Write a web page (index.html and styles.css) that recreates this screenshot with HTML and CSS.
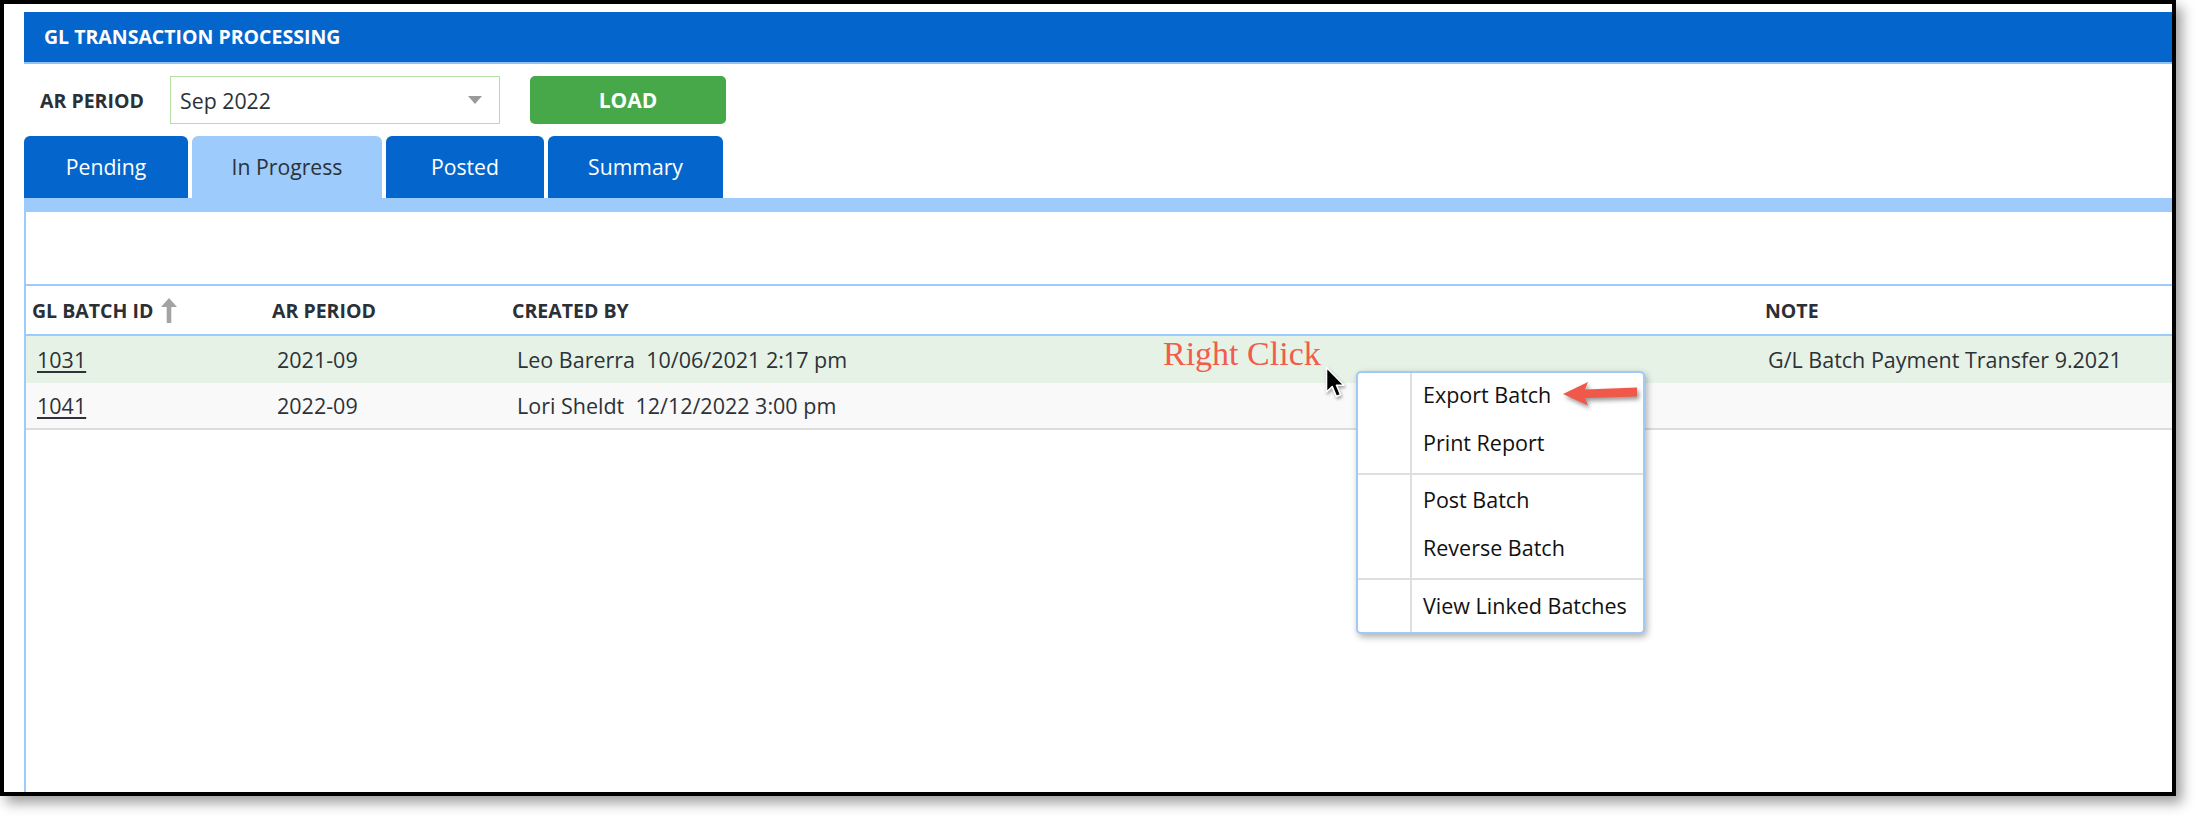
FILE: index.html
```html
<!DOCTYPE html>
<html lang="en">
<head>
<meta charset="utf-8">
<title>GL Transaction Processing</title>
<link rel="stylesheet" href="styles.css">
</head>
<body>
<div class="frame">
  <div class="titlebar">GL TRANSACTION PROCESSING</div>
  <div class="toolbar">
    <span class="field-label">AR PERIOD</span>
    <div class="select"><span class="select-value">Sep 2022</span><span class="caret"></span></div>
    <button class="btn-load">LOAD</button>
  </div>
  <div class="tabs">
    <div class="tab tab-pending">Pending</div>
    <div class="tab tab-progress active">In Progress</div>
    <div class="tab tab-posted">Posted</div>
    <div class="tab tab-summary">Summary</div>
  </div>
  <div class="tabbar"></div>
  <div class="panel">
    <div class="grid">
      <div class="row head">
        <div class="cell">GL BATCH ID
          <svg class="sort-icon" viewBox="0 0 16 25" width="16" height="25" aria-hidden="true">
            <polygon points="8,0 16,9 10.3,9 10.3,25 5.7,25 5.7,9 0,9" fill="#a3a3a3"/>
          </svg>
        </div>
        <div class="cell">AR PERIOD</div>
        <div class="cell">CREATED BY</div>
        <div class="cell">NOTE</div>
      </div>
      <div class="row r1">
        <div class="cell"><a class="id-link">1031</a></div>
        <div class="cell">2021-09</div>
        <div class="cell">Leo Barerra&nbsp; 10/06/2021 2:17 pm</div>
        <div class="cell note">G/L Batch Payment Transfer 9.2021</div>
      </div>
      <div class="row r2">
        <div class="cell"><a class="id-link">1041</a></div>
        <div class="cell">2022-09</div>
        <div class="cell">Lori Sheldt&nbsp; 12/12/2022 3:00 pm</div>
        <div class="cell note"></div>
      </div>
    </div>
  </div>
</div>

<div class="annot">Right Click</div>

<svg class="cursor" viewBox="0 0 22 34" width="22" height="34" aria-hidden="true">
  <path d="M1.5 1.5 L1.5 26 L7.2 20.6 L11.4 30.6 L15.6 28.8 L11.5 19.2 L19 19.2 Z" fill="#000" stroke="#fff" stroke-width="1.6" stroke-linejoin="round"/>
</svg>

<div class="menu">
  <div class="menu-group g1">
    <div class="menu-item">Export Batch</div>
    <div class="menu-item">Print Report</div>
  </div>
  <div class="menu-group g2">
    <div class="menu-item">Post Batch</div>
    <div class="menu-item">Reverse Batch</div>
  </div>
  <div class="menu-group g3">
    <div class="menu-item">View Linked Batches</div>
  </div>
</div>

<svg class="red-arrow" viewBox="0 0 82 30" width="82" height="30" aria-hidden="true">
  <path d="M3 15 L28 3 L25 10.5 L77 8.5 L77 17.5 L25 19 L28 26.5 Z" fill="#f0584a"/>
</svg>
</body>
</html>
```

FILE: styles.css
```css
html, body {
  margin: 0;
  padding: 0;
  background: #ffffff;
}

body {
  font-family: "Open Sans", "Noto Sans", "Liberation Sans", sans-serif;
  color: #2c3238;
  width: 2196px;
  height: 816px;
  overflow: hidden;
}

.frame {
  box-sizing: border-box;
  width: 2176px;
  height: 796px;
  border: 4px solid #000;
  padding: 8px 0 0 20px;
  background: #fff;
  box-shadow: 6px 7px 12px rgba(0, 0, 0, 0.38);
  display: flex;
  flex-direction: column;
  overflow: hidden;
}

.titlebar {
  height: 50px;
  line-height: 50px;
  background: #0466cc;
  border-bottom: 2px solid #8ec4f7;
  color: #fff;
  font-weight: 700;
  font-size: 19.5px;
  padding-left: 20px;
  flex: none;
}

.toolbar {
  margin-top: 12px;
  height: 48px;
  display: flex;
  align-items: center;
  padding-left: 16px;
  flex: none;
}

.field-label {
  width: 130px;
  font-weight: 700;
  font-size: 19.5px;
  color: #2a3036;
}

.select {
  box-sizing: border-box;
  width: 330px;
  height: 48px;
  border: 1px solid #b5dea2;
  display: flex;
  align-items: center;
  justify-content: space-between;
  padding: 0 17px 0 9px;
  font-size: 21.3px;
  color: #2c3238;
}

.caret {
  width: 0;
  height: 0;
  border-left: 7.5px solid transparent;
  border-right: 7.5px solid transparent;
  border-top: 8px solid #9a9a9a;
}

.btn-load {
  margin-left: 30px;
  width: 196px;
  height: 48px;
  border: none;
  border-radius: 5px;
  background: #47a84a;
  color: #fff;
  font-family: inherit;
  font-weight: 700;
  font-size: 21px;
  padding: 0;
}

.tabs {
  margin-top: 12px;
  height: 62px;
  display: flex;
  gap: 4px;
  flex: none;
}

.tab {
  height: 62px;
  line-height: 62px;
  text-align: center;
  background: #0466cc;
  color: #fff;
  font-size: 21.2px;
  border-radius: 6px 6px 0 0;
}

.tab.active {
  background: #9dcbfb;
  color: #2c3238;
}

.tab-pending { width: 164px; }
.tab-progress { width: 190px; }
.tab-posted { width: 158px; }
.tab-summary { width: 175px; }

.tabbar {
  height: 14px;
  background: #9dcbfb;
  flex: none;
}

.panel {
  flex: 1;
  border-left: 2px solid #9dcbfb;
  padding-top: 72px;
  background: #fff;
}

.grid {
  border-top: 2px solid #9dcbfb;
}

.row {
  display: grid;
  grid-template-columns: 240px 240px 1253px 1fr;
  align-items: center;
}

.row.head {
  height: 48px;
  border-bottom: 2px solid #9dcbfb;
  font-weight: 700;
  font-size: 19.5px;
  color: #2a3036;
}

.row.head .cell {
  padding-left: 6px;
  display: flex;
  align-items: center;
}

.sort-icon {
  margin-left: 8px;
  filter: blur(0.4px);
}

.row.r1,
.row.r2 {
  font-size: 21.5px;
  color: #2c3238;
}

.row.r1 {
  height: 47px;
  background: #e7f2e7;
}

.row.r2 {
  height: 45px;
  background: #f9f9f9;
  border-bottom: 2px solid #dcdcdc;
}

.row.r1 .cell,
.row.r2 .cell {
  padding-left: 11px;
  white-space: nowrap;
}

.row .cell.note {
  padding-left: 9px;
}

.id-link {
  text-decoration: underline;
  text-underline-offset: 3px;
  color: #2c3238;
}

/* overlays */
.annot {
  position: absolute;
  left: 1163px;
  top: 337px;
  font-family: "Liberation Serif", "Times New Roman", serif;
  font-size: 34px;
  line-height: 34px;
  color: #f25c4b;
  white-space: nowrap;
}

.cursor {
  position: absolute;
  left: 1325px;
  top: 366px;
  filter: drop-shadow(1px 2px 1.5px rgba(0, 0, 0, 0.35));
}

.menu {
  position: absolute;
  left: 1356px;
  top: 371px;
  width: 289px;
  box-sizing: border-box;
  border: 2px solid #9fcaf5;
  border-radius: 5px;
  background: linear-gradient(to right, transparent 52px, #dedede 52px, #dedede 54px, transparent 54px), #fff;
  box-shadow: 2px 3px 7px rgba(0, 0, 0, 0.32);
  font-size: 21.5px;
  color: #111;
}

.menu-group + .menu-group {
  border-top: 2px solid #dedede;
}

.menu-group.g1 { padding: 0 0 4px; }
.menu-group.g2 { padding: 3px 0 4px; }
.menu-group.g3 { padding: 4px 0 0; }

.menu-item {
  height: 44px;
  line-height: 44px;
  padding: 0 0 4px 65px;
  white-space: nowrap;
}

.red-arrow {
  position: absolute;
  left: 1560px;
  top: 379px;
  filter: drop-shadow(2px 3px 2px rgba(0, 0, 0, 0.4));
}
```
